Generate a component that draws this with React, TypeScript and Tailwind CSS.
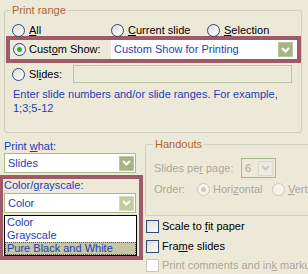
import React from "react";

function Radio({ checked = false, disabled = false }: { checked?: boolean; disabled?: boolean }) {
  return (
    <span
      className={
        "flex h-[13px] w-[13px] shrink-0 items-center justify-center rounded-full border " +
        (disabled
          ? "border-[#CAC8BB] bg-[#F5F4EA]"
          : "border-[#2C4A7A] bg-gradient-to-br from-[#DCDBD2] to-white")
      }
    >
      {checked && (
        <span
          className={
            "h-[5px] w-[5px] rounded-full " +
            (disabled ? "bg-[#CAC8BB]" : "bg-[#2BAF2B]")
          }
        />
      )}
    </span>
  );
}

function Checkbox({ disabled = false }: { disabled?: boolean }) {
  return (
    <span
      className={
        "block h-[13px] w-[13px] shrink-0 border " +
        (disabled
          ? "border-[#CAC8BB] bg-white"
          : "border-[#2C4A7A] bg-gradient-to-br from-[#DCDBD2] to-white")
      }
    />
  );
}

function DropButton({ light = false, disabled = false }: { light?: boolean; disabled?: boolean }) {
  const bg = disabled
    ? "bg-[#EEEDE5] border-[#DAD9CC]"
    : light
    ? "bg-[#C3CCA0] border-[#D3DBB6]"
    : "bg-[#A6B386] border-[#BCC7A0]";
  return (
    <span className={"flex h-[15px] w-[15px] shrink-0 items-center justify-center border " + bg}>
      <svg width="9" height="6" viewBox="0 0 9 6">
        <path
          d="M1 1 L4.5 4.5 L8 1"
          fill="none"
          stroke={disabled ? "#C9C8BC" : "#FFFFFF"}
          strokeWidth="2"
        />
      </svg>
    </span>
  );
}

export default function App() {
  return (
    <div className="h-[274px] w-[308px] overflow-hidden bg-[#ECE9D8] font-['Liberation_Sans',Arial,sans-serif] text-[11px] leading-[13px] text-black">
      {/* Print range */}
      <fieldset className="ml-[4px] mt-[3px] h-[130px] w-[298px] rounded-[3px] border border-[#D0D0BF]">
        <legend className="ml-[5px] px-[2px] leading-[15px] text-[#B2652A]">Print range</legend>

        <div className="mt-[5px] flex h-[14px] items-center pl-[7px]">
          <div className="flex w-[99px] items-center gap-[4px]">
            <Radio />
            <span><u>A</u>ll</span>
          </div>
          <div className="flex w-[96px] items-center gap-[4px]">
            <Radio />
            <span><u>C</u>urrent slide</span>
          </div>
          <div className="flex items-center gap-[4px]">
            <Radio />
            <span><u>S</u>election</span>
          </div>
        </div>

        <div className="ml-[1px] mt-[-1px] flex h-[27px] w-[295px] items-center border-[4px] border-[#9F5A68]">
          <div className="flex w-[101px] items-center gap-[3px] pl-[3px]">
            <Radio checked />
            <span>Cust<u>o</u>m Show:</span>
          </div>
          <div className="flex h-full flex-1 items-center justify-between bg-white pl-[3px] pr-[4px] text-[#1D40B8]">
            <span>Custom Show for Printing</span>
            <DropButton />
          </div>
        </div>

        <div className="mt-[2px] flex h-[18px] items-center pl-[7px]">
          <div className="flex w-[61px] items-center gap-[4px]">
            <Radio />
            <span>Sl<u>i</u>des:</span>
          </div>
          <div className="h-full w-[219px] border border-[#B9C4A2]" />
        </div>

        <p className="mt-[4px] pl-[8px] leading-[14px] text-[#1D40B8]">
          Enter slide numbers and/or slide ranges. For example,
          <br />
          1;3;5-12
        </p>
      </fieldset>

      <div className="flex">
        {/* left column */}
        <div className="w-[143px] shrink-0">
          <div className="ml-[4px] mt-[7px] text-[#1D40B8]">
            Print <u>w</u>hat:
          </div>
          <div className="ml-[4px] flex h-[20px] w-[132px] items-center justify-between border border-[#A9B78C] bg-white pl-[3px] pr-[1px] text-[#1D40B8]">
            <span>Slides</span>
            <DropButton />
          </div>

          <div className="ml-[-1px] mt-[2px] w-[144px] border-[4px] border-[#9F5A68]">
            <div className="pl-[1px] leading-[12px] text-[#1D40B8]">
              Color/<u>g</u>rayscale:
            </div>
            <div className="ml-[1px] mt-[2px] flex h-[20px] w-[132px] items-center justify-between border border-[#A9B78C] bg-white pl-[3px] pr-[1px] text-[#1D40B8]">
              <span>Color</span>
              <DropButton light />
            </div>
            <div className="ml-[1px] mt-[2px] w-[133px] border border-black bg-white text-[#1D40B8]">
              <div className="flex h-[13px] items-center pl-[2px]">Color</div>
              <div className="flex h-[13px] items-center pl-[2px]">Grayscale</div>
              <div className="flex h-[13px] items-center border border-dotted border-[#55554A] bg-[#C6C5A6] pl-[1px]">
                Pure Black and White
              </div>
            </div>
          </div>
        </div>

        {/* right column */}
        <div className="flex-1">
          <fieldset className="ml-[2px] mt-[4px] h-[79px] w-[175px] rounded-[3px] border border-[#D0D0BF]">
            <legend className="ml-[7px] px-[2px] leading-[14px] text-[#B2652A]">Handouts</legend>
            <div className="mt-[7px] flex h-[20px] items-center pl-[8px] text-[#ACA899]">
              <span className="w-[87px]">
                Slides pe<u>r</u> page:
              </span>
              <div className="flex h-[20px] w-[35px] items-center justify-between border border-[#A9B78C] pl-[3px] pr-[2px]">
                <span>6</span>
                <DropButton disabled />
              </div>
            </div>
            <div className="mt-[4px] flex h-[14px] items-center pl-[8px] text-[#ACA899]">
              <span className="w-[43px]">Order:</span>
              <div className="flex w-[75px] items-center gap-[3px]">
                <Radio checked disabled />
                <span>Hori<u>z</u>ontal</span>
              </div>
              <div className="flex items-center gap-[3px]">
                <Radio disabled />
                <span><u>V</u>ertical</span>
              </div>
            </div>
          </fieldset>

          <div className="mt-[4px] flex h-[13px] items-center gap-[3px] pl-[3px]">
            <Checkbox />
            <span>Scale to <u>f</u>it paper</span>
          </div>
          <div className="mt-[7px] flex h-[13px] items-center gap-[3px] pl-[3px]">
            <Checkbox />
            <span>Fra<u>m</u>e slides</span>
          </div>
          <div className="mt-[6px] flex h-[13px] items-center gap-[3px] pl-[3px] text-[#ACA899]">
            <Checkbox disabled />
            <span className="whitespace-nowrap">Print comments and in<u>k</u> markup</span>
          </div>
        </div>
      </div>
    </div>
  );
}
